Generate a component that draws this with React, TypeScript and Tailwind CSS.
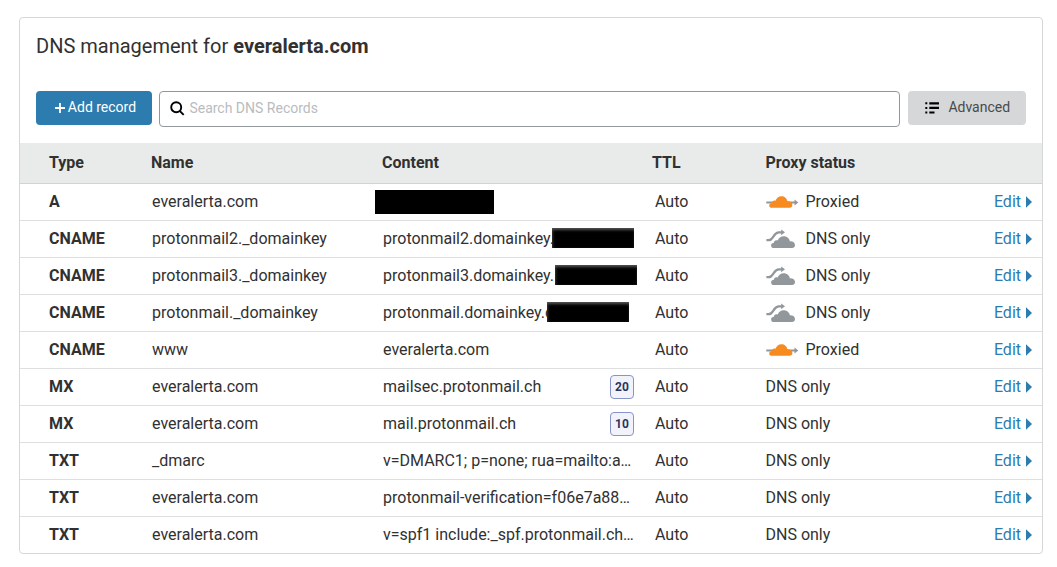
import React from "react";

type Status = "proxied" | "dns" | "plain";

interface DnsRecord {
  type: string;
  name: string;
  content: string;
  status: Status;
  priority?: number;
  mask?: string;
}

const softMask = "bg-black shadow-[inset_0_3px_3px_-1px_#555,inset_2px_0_3px_-1px_#333]";

const records: DnsRecord[] = [
  { type: "A", name: "everalerta.com", content: "", status: "proxied", mask: "w-[119px] h-6 left-[355px] top-[6px] bg-black" },
  { type: "CNAME", name: "protonmail2._domainkey", content: "protonmail2.domainkey.", status: "dns", mask: `w-[82px] h-5 left-[532px] top-[7px] ${softMask}` },
  { type: "CNAME", name: "protonmail3._domainkey", content: "protonmail3.domainkey.", status: "dns", mask: `w-[82px] h-5 left-[535px] top-[7px] ${softMask}` },
  { type: "CNAME", name: "protonmail._domainkey", content: "protonmail.domainkey.d", status: "dns", mask: `w-[82px] h-5 left-[527px] top-[7px] ${softMask}` },
  { type: "CNAME", name: "www", content: "everalerta.com", status: "proxied" },
  { type: "MX", name: "everalerta.com", content: "mailsec.protonmail.ch", status: "plain", priority: 20 },
  { type: "MX", name: "everalerta.com", content: "mail.protonmail.ch", status: "plain", priority: 10 },
  { type: "TXT", name: "_dmarc", content: "v=DMARC1; p=none; rua=mailto:a…", status: "plain" },
  { type: "TXT", name: "everalerta.com", content: "protonmail-verification=f06e7a88…", status: "plain" },
  { type: "TXT", name: "everalerta.com", content: "v=spf1 include:_spf.protonmail.ch…", status: "plain" },
];

function ProxiedIcon() {
  return (
    <svg className="mr-[7px] h-5 w-[33px] shrink-0" viewBox="0 0 33 20">
      <path d="M.3 9.500H28.500V7.400L32.300 10.500 28.500 13.600V11.400H.3z" fill="#92979b" />
      <path d="M6 15.800C4.200 15.800 3.200 14.900 3.200 13.400 3.200 11.900 4.400 10.900 6 10.900 5.900 9 7.900 7.900 9.500 8.800 10.400 5.900 12.700 4.200 15.400 4.200 18.500 4.200 20.900 6.300 21.400 9.300 24.200 9 26.400 10.700 26.400 13 26.400 14.800 25.300 15.800 23.500 15.800z" fill="#f68b1f" />
    </svg>
  );
}

function BypassIcon() {
  return (
    <svg className="mr-[7px] h-5 w-[33px] shrink-0" viewBox="0 0 33 20">
      <path d="M.4 11.200H2.800C7.400 11.200 7.400 3.400 12.800 3.400H16" fill="none" stroke="#92979b" strokeWidth="2.200" />
      <path d="M15.200.4 19 3.300 15.200 6.200z" fill="#92979b" />
      <path d="M8.100 19C6.200 19 5.100 18 5.100 16.400 5.100 14.800 6.300 13.700 8 13.700 7.900 11.700 10 10.600 11.700 11.600 12.600 8.900 14.900 7.200 17.700 7.200 20.900 7.200 23.400 9.300 23.900 12.400 26.700 12.100 29 13.800 29 16.100 29 17.900 27.800 19 26 19z" fill="#92979b" />
    </svg>
  );
}

function Row({ record }: { record: DnsRecord }) {
  return (
    <div className="relative grid h-[37px] grid-cols-[103px_231px_272px_110.5px_1fr_auto] items-center border-b border-[#dedfe0] pr-[10px] pl-[29px] text-[16px] leading-6 last:h-9 last:border-b-0">
      <span className="font-bold">{record.type}</span>
      <span>{record.name}</span>
      <span className="flex items-center justify-between whitespace-nowrap pr-[21px]">
        {record.content}
        {record.priority !== undefined && (
          <span className="flex h-6 w-6 items-center justify-center rounded-[4px] border border-[#8794ca] bg-[#f2f3fa] text-[12px] font-bold text-[#2b3360]">
            {record.priority}
          </span>
        )}
      </span>
      <span>Auto</span>
      <span className="flex items-center">
        {record.status === "proxied" && <ProxiedIcon />}
        {record.status === "dns" && <BypassIcon />}
        {record.status === "proxied" ? "Proxied" : "DNS only"}
      </span>
      <a className="flex items-center gap-[5px] text-[#2c7cb0]">
        Edit
        <svg className="mb-px h-[12px] w-[6px]" viewBox="0 0 6 12">
          <path d="M0 .3 6 6 0 11.700z" fill="currentColor" />
        </svg>
      </a>
      {record.mask && <span className={`absolute ${record.mask}`} />}
    </div>
  );
}

export default function App() {
  return (
    <div className="h-[567px] bg-white pt-[17px] pl-[19px] font-['Roboto',sans-serif] text-[#313131]">
      <section className="h-[537px] w-[1024px] overflow-hidden rounded-[4px] border border-[#d5d7d8]">
        <h1 className="h-[73px] pt-[13px] pl-4 text-[20px] leading-[30px]">
          DNS management for <b className="font-bold">everalerta.com</b>
        </h1>
        <div className="flex h-[52px] items-start px-4 text-[14px]">
          <button className="flex h-[34px] w-[116px] items-center justify-center rounded-[4px] bg-[#2c7cb0] pb-px pl-[3px] text-white">
            <svg className="mt-px mr-[3px] h-[10px] w-[10px]" viewBox="0 0 10 10">
              <path d="M5 0v10M0 5h10" stroke="currentColor" strokeWidth="1.800" />
            </svg>
            Add record
          </button>
          <label className="ml-[7px] flex h-9 w-[741px] items-center rounded-[4px] border border-[#92979b] pl-[10px]">
            <svg className="mb-[2px] mr-[4.400px] h-[15px] w-[15px]" viewBox="0 0 15 15" fill="none" stroke="#000" strokeWidth="1.900">
              <circle cx="6.200" cy="6.200" r="5" />
              <path d="m9.700 9.900 4 4" />
            </svg>
            <input className="min-w-0 flex-1 pb-[2px] text-[14px] outline-none placeholder:text-[#b9bcbe]" placeholder="Search DNS Records" />
          </label>
          <button className="ml-2 flex h-[34px] w-[118px] items-center rounded-[4px] bg-[#d5d7d8] pb-px pl-[17px] text-[#4a4a4a]">
            <svg className="mt-px mr-[9.400px] h-3 w-[14px]" viewBox="0 0 14 12" fill="#000">
              <path d="M.3.3h2v2h-2zM.3 4.900h2v2h-2zM.3 9.500h2v2h-2zM4.300.2H14v2.200H4.300zM4.300 4.800H14V7H4.300zM4.300 9.400h5.200v2.200H4.300z" />
            </svg>
            Advanced
          </button>
        </div>
        <div className="grid h-[41px] grid-cols-[102px_231px_270px_113.5px_1fr] items-center border-b border-[#d0d2d3] bg-[#e9ebeb] pl-[29px] text-[16px] font-bold">
          <span>Type</span>
          <span>Name</span>
          <span>Content</span>
          <span>TTL</span>
          <span>Proxy status</span>
        </div>
        <div>
          {records.map((record, index) => (
            <Row key={index} record={record} />
          ))}
        </div>
      </section>
    </div>
  );
}
